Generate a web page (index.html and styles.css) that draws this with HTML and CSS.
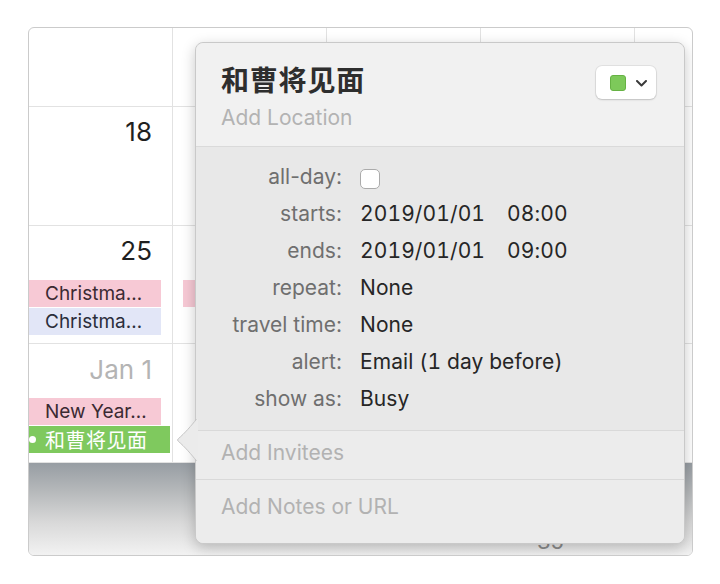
FILE: index.html
```html
<!DOCTYPE html>
<html>
<head>
<meta charset="utf-8">
<link rel="stylesheet" href="styles.css">
</head>
<body>
<div class="window">
  <div class="grid">
    <div class="cell"></div>
    <div class="cell"></div>
    <div class="cell"></div>
    <div class="cell"></div>
    <div class="cell last"></div>

    <div class="cell"><div class="date">18</div></div>
    <div class="cell"></div>
    <div class="cell"></div>
    <div class="cell"></div>
    <div class="cell last"></div>

    <div class="cell">
      <div class="date">25</div>
      <div class="ev pink">Christma…</div>
      <div class="ev blue">Christma…</div>
    </div>
    <div class="cell"><div class="date"></div><div class="ev pink shifted"></div></div>
    <div class="cell"></div>
    <div class="cell"></div>
    <div class="cell last"></div>

    <div class="cell">
      <div class="date muted">Jan 1</div>
      <div class="ev pink">New Year…</div>
      <div class="ev green"><span class="dot"></span>和曹将见面</div>
    </div>
    <div class="cell"></div>
    <div class="cell"></div>
    <div class="cell"></div>
    <div class="cell last"></div>
  </div>
  <div class="shade"><span class="weeknum">35</span></div>

  <div class="popover">
    <svg class="arrow" width="22" height="42" viewBox="0 0 22 42">
      <path d="M22 0 L21 0 C16 6 8 15 2.5 19.5 Q0.5 21 2.5 22.5 C8 27 16 36 21 42 L22 42 Z" fill="#ebebeb"/>
      <path d="M20.5 0 C16 6 8 15 2.5 19.5 Q0.5 21 2.5 22.5 C8 27 16 36 20.5 42" fill="none" stroke="#c6c6c6" stroke-width="1"/>
    </svg>
    <div class="pop-head">
      <div class="titles">
        <div class="title">和曹将见面</div>
        <div class="loc">Add Location</div>
      </div>
      <div class="color-btn">
        <span class="swatch"></span>
        <svg class="chev" width="11" height="7" viewBox="0 0 11 7"><path d="M1 1 L5.5 5.5 L10 1" fill="none" stroke="#3a3a3a" stroke-width="2" stroke-linecap="round" stroke-linejoin="round"/></svg>
      </div>
    </div>
    <div class="pop-form">
      <div class="lbl">all-day:</div><div class="val"><span class="check"></span></div>
      <div class="lbl">starts:</div><div class="val"><span class="d">2019/01/01</span><span>08:00</span></div>
      <div class="lbl">ends:</div><div class="val"><span class="d">2019/01/01</span><span>09:00</span></div>
      <div class="lbl">repeat:</div><div class="val">None</div>
      <div class="lbl">travel time:</div><div class="val">None</div>
      <div class="lbl">alert:</div><div class="val">Email (1 day before)</div>
      <div class="lbl">show as:</div><div class="val">Busy</div>
    </div>
    <div class="pop-row invitees">Add Invitees</div>
    <div class="pop-row notes">Add Notes or URL</div>
  </div>
</div>
</body>
</html>
```

FILE: styles.css
```css
* { box-sizing: border-box; }

body {
  margin: 0;
  background: #ffffff;
  font-family: "Inter", "Noto Sans CJK SC", sans-serif;
}

.window {
  position: relative;
  margin: 27px 0 0 28px;
  width: 665px;
  height: 529px;
  border: 1px solid #cbcbcb;
  border-radius: 6px;
  overflow: hidden;
  background: #ffffff;
}

.grid {
  display: grid;
  grid-template-columns: 144px 154px 154px 154px 1fr;
  grid-template-rows: 79px 119px 118px 119px;
}

.cell {
  border-right: 1px solid #e2e2e2;
  border-bottom: 1px solid #e2e2e2;
  display: flex;
  flex-direction: column;
  gap: 1px;
  overflow: hidden;
}
.cell.last { border-right: none; }

.date {
  height: 53px;
  flex: none;
  padding: 10px 20px 0 0;
  text-align: right;
  font-size: 26px;
  line-height: 30px;
  color: #1f1f1f;
}
.date.muted { color: #b4b4b4; padding-top: 11px; }

.ev {
  flex: none;
  height: 27px;
  margin-right: 11px;
  padding-left: 16px;
  font-size: 19px;
  line-height: 27px;
  white-space: nowrap;
  overflow: hidden;
}
.ev.pink { background: #f7c9d5; color: #3b2a32; }
.ev.blue { background: #e2e6f7; color: #2b2e3b; }
.ev.shifted { margin-left: 10px; }
.ev.green {
  position: relative;
  background: #7fc95e;
  color: #ffffff;
  margin-right: 2px;
  font-family: "Noto Sans CJK SC", sans-serif;
  font-size: 20px;
  letter-spacing: 0.5px;
}
.dot {
  position: absolute;
  left: 0;
  top: 10px;
  width: 7px;
  height: 7px;
  border-radius: 50%;
  background: #ffffff;
}

.shade {
  height: 92px;
  padding: 65px 0 0 508px;
  background: linear-gradient(to bottom, #979da3 0%, #b5b8ba 30%, #d9d9d9 65%, #f2f2f2 100%);
}
.weeknum {
  font-size: 22px;
  line-height: 26px;
  color: #8c8c8c;
}

.popover {
  position: absolute;
  left: 166px;
  top: 14px;
  width: 490px;
  border: 1px solid #c9c9c9;
  border-radius: 8px;
  background: #ececec;
  box-shadow: 0 4px 14px rgba(0, 0, 0, 0.22);
}

.arrow {
  position: absolute;
  left: -20px;
  top: 376px;
}

.pop-head {
  height: 104px;
  display: flex;
  justify-content: space-between;
  align-items: flex-start;
  padding: 0 28px 0 25px;
  background: #f1f1f1;
  border-bottom: 1px solid #dadada;
  border-radius: 8px 8px 0 0;
}
.titles { padding-top: 18px; }
.title {
  font-family: "Noto Sans CJK SC", sans-serif;
  font-weight: 700;
  font-size: 28px;
  line-height: 36px;
  letter-spacing: 0.8px;
  color: #2e2e2e;
}
.loc {
  margin-top: 7px;
  font-size: 21px;
  line-height: 28px;
  color: #b3b3b3;
}

.color-btn {
  margin-top: 23px;
  width: 60px;
  height: 33px;
  display: flex;
  align-items: center;
  gap: 10px;
  padding: 1px 0 0 14px;
  background: #ffffff;
  border-radius: 6px;
  box-shadow: 0 0 0 1px rgba(0, 0, 0, 0.06), 0 1px 2px rgba(0, 0, 0, 0.15);
}
.swatch {
  width: 16px;
  height: 16px;
  border-radius: 3px;
  background: #7dc95a;
  border: 1px solid #66b244;
}

.pop-form {
  height: 284px;
  display: grid;
  grid-template-columns: 146px 1fr;
  grid-auto-rows: 37px;
  column-gap: 18px;
  padding-top: 11px;
  background: #e8e8e8;
  border-bottom: 1px solid #d9d9d9;
  font-size: 21px;
  line-height: 37px;
}
.lbl { text-align: right; color: #6f6f6f; }
.val {
  color: #262626;
  display: flex;
  align-items: center;
  font-variant-numeric: tabular-nums;
  letter-spacing: 0.1px;
}
.val .d { width: 147px; }
.check {
  margin-top: 4px;
  width: 20px;
  height: 20px;
  border: 1px solid #ababab;
  border-radius: 5px;
  background: #ffffff;
}

.pop-row {
  padding-left: 25px;
  font-size: 21px;
  line-height: 28px;
  color: #b2b2b2;
  background: #ececec;
}
.invitees {
  height: 49px;
  padding-top: 8px;
  border-bottom: 1px solid #d9d9d9;
}
.notes {
  height: 63px;
  padding-top: 13px;
  border-radius: 0 0 8px 8px;
}
```
